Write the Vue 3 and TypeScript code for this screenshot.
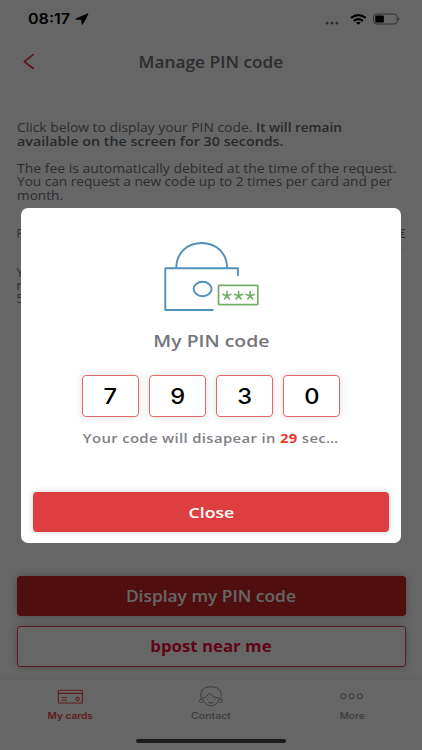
<script setup lang="ts">
import { ref } from 'vue'

const digits = ref<string[]>(['7', '9', '3', '0'])
const secondsLeft = ref(29)
const stars = [227, 238.6, 250.2]
</script>

<template>
  <div class="screen">
    <div class="status">
      <span class="time"><span class="fit">08:17</span></span>
      <svg class="arrow" width="14" height="12" viewBox="0 0 14 12"><path d="M13 .8.8 6l5.900.6.7 4.800z" fill="#000" stroke="#000" stroke-width="1" stroke-linejoin="round" /></svg>
      <svg class="signals" width="76" height="14" viewBox="325 11 76 14">
        <g fill="#707070"><circle cx="327" cy="22" r="1.5" /><circle cx="332" cy="22" r="1.5" /><circle cx="337" cy="22" r="1.5" /></g>
        <g fill="none" stroke="#000" stroke-width="2.1"><path d="M351 16.9q7.3-5.6 14.8 0" /><path d="M353.8 19.8q4.6-3.4 9.2 0" /></g>
        <path d="M355.9 21.6q2.5-1.6 5 0l-2.500 2.200z" />
        <rect x="373.6" y="13.1" width="23.6" height="9.9" rx="2.8" fill="none" stroke="#7b7b7b" stroke-width="1" />
        <path d="M398.300 16.300q2.400 1.800 0 3.500z" fill="#7b7b7b" />
        <rect x="375.3" y="14.500" width="8.6" height="7.1" rx="1.2" />
      </svg>
    </div>

    <header class="nav">
      <svg class="back" width="12" height="18" viewBox="0 0 12 18"><path d="M10.3 1.500 1.300 8.700l9 6.800" fill="none" stroke="#e62e3c" stroke-width="1.600" stroke-linecap="round" stroke-linejoin="round" /></svg>
      <h1><span class="fit">Manage PIN code</span></h1>
    </header>

    <main class="copy">
      <div class="para first">
        <div class="line"><span class="fit l1">Click below to display your PIN code. </span><b class="fit l1b">It will remain</b></div>
        <div class="line"><b class="fit l2">available on the screen for 30 seconds.</b></div>
      </div>
      <div class="para second">
        <div class="line"><span class="fit l3">The fee is automatically debited at the time of the request.</span></div>
        <div class="line"><span class="fit l4">You can request a new code up to 2 times per card and per</span></div>
        <div class="line"><span class="fit l4">month.</span></div>
      </div>
      <div class="fee"><span>F</span><span>€</span></div>
      <div class="para third">
        <div class="line">Y</div>
        <div class="line">n</div>
        <div class="line">5</div>
      </div>
    </main>

    <div class="actions">
      <button class="btn primary"><span class="fit">Display my PIN code</span></button>
      <button class="btn outline"><span class="fit">bpost near me</span></button>
    </div>

    <footer class="bottom">
      <nav class="tabs">
        <div class="tab active">
          <svg width="26" height="22" viewBox="57 685 26 22" fill="none" stroke="currentColor" stroke-width="1.1">
            <rect x="58.4" y="690.2" width="24" height="12.8" rx=".6" /><path d="M58.4 693.4h24M61.5 697.7h5.6M61.5 700.2h5.6" /><circle cx="77.7" cy="699" r="1.6" />
          </svg>
          <span class="fit">My cards</span>
        </div>
        <div class="tab contact">
          <svg width="26" height="22" viewBox="198 685 26 22" fill="none" stroke="currentColor" stroke-width="1" stroke-linecap="round">
            <path d="M201.2 699.5q-3.2-12.8 9.8-12.8t9.8 12.8" />
            <path d="M202.6 698.2c2.4-.7 5.2-2.4 7-5.2 2.7 3.7 6.2 4.7 9.8 5.2" />
            <path d="M203 699c.6 3.8 4.3 6.9 8 6.9s7.4-3.1 8-6.9" />
            <path d="M201.2 699.3q-2.2.2-1.7 2.2t3.3.7M220.8 699.3q2.2.2 1.7 2.2t-3.3.7" />
            <path d="M208.8 702.6q2.2 1.2 4.4 0M207.7 698.9v.3M214.3 698.9v.3" />
          </svg>
          <span class="fit">Contact</span>
        </div>
        <div class="tab">
          <svg width="26" height="22" viewBox="338.9 685 26 22" fill="none" stroke="currentColor" stroke-width="1.1">
            <circle cx="343.3" cy="696.3" r="2.5" /><circle cx="351.5" cy="696.3" r="2.5" /><circle cx="359.7" cy="696.3" r="2.5" />
          </svg>
          <span class="fit">More</span>
        </div>
      </nav>
      <div class="home"><i></i></div>
    </footer>

    <div class="overlay">
      <section class="modal">
        <svg class="lock" width="98" height="72" viewBox="162 242 98 72" fill="none">
          <g stroke="#4f91bc" stroke-width="1.9" stroke-linecap="round" stroke-linejoin="round">
            <path d="M176.3 268c0-15.2 11.2-25 25.3-25s25.5 9.8 25.5 25" />
            <path d="M237.9 275.2v-6.9h-72.6v41.7h47.5" />
            <ellipse cx="202.6" cy="289" rx="9" ry="7.2" />
          </g>
          <rect x="218.5" y="285.4" width="39.3" height="19.3" rx=".6" stroke="#74ad6a" stroke-width="1.7" />
          <g stroke="#74ad6a" stroke-width="1.6">
            <path v-for="x in stars" :key="x" :d="`M${x} 295.7v-4.9M${x} 295.7l-4.6-1.5M${x} 295.7l4.6-1.5M${x} 295.7l-2.9 3.9M${x} 295.7l2.9 3.9`" />
          </g>
        </svg>
        <h2><span class="fit">My PIN code</span></h2>
        <div class="pin">
          <div v-for="(d, i) in digits" :key="i" class="digit"><span class="fit">{{ d }}</span></div>
        </div>
        <p class="timer"><span class="fit">Your code will disapear in <b>{{ secondsLeft }}</b> sec…</span></p>
        <button class="close"><span class="fit">Close</span></button>
      </section>
    </div>
  </div>
</template>

<style>
body {
  margin: 0;
  background: #fff;
}
</style>

<style scoped>
.screen {
  position: relative;
  width: 422px;
  height: 750px;
  overflow: hidden;
  display: flex;
  flex-direction: column;
  background: #fff;
  font-family: 'Open Sans', 'Noto Sans', sans-serif;
  color: #717277;
}
.fit {
  display: inline-block;
  white-space: pre;
}
.status {
  height: 37px;
  flex: none;
  display: flex;
  align-items: center;
  padding-left: 27.5px;
  color: #000;
}
.time {
  width: 47px;
  font: 600 14px/20px Inter, sans-serif;
}
.time .fit {
  transform: scaleX(1.15);
  transform-origin: left;
}
.signals {
  margin: 0 21px 0 auto;
}
.nav {
  height: 50px;
  flex: none;
  display: grid;
  grid-template-columns: 1fr auto 1fr;
  align-items: center;
}
.back {
  margin-left: 23px;
}
h1,
h2,
p {
  margin: 0;
}
h1 {
  font-size: 15.5px;
  line-height: 24px;
  font-weight: 650;
  color: #707177;
}
h1 .fit {
  transform: scaleX(1.115);
}
.copy {
  flex: none;
  height: 455px;
  margin-top: 34px;
  padding: 0 16.5px;
  font-size: 12px;
}
.para .fit {
  transform-origin: left;
}
.line {
  display: flex;
}
.first {
  line-height: 14px;
}
.first b {
  font-weight: 600;
  color: #66676b;
}
.l1 {
  width: 207.5px;
  margin-right: 32px;
  transform: scaleX(1.154);
}
.l1b {
  transform: scaleX(1.13);
}
.l2 {
  transform: scaleX(1.19);
}
.l3 {
  transform: scaleX(1.163);
}
.l4 {
  transform: scaleX(1.137);
}
.second {
  margin-top: 13px;
  line-height: 13.3px;
}
.fee {
  display: flex;
  justify-content: space-between;
  margin-top: 17px;
  height: 30px;
  line-height: 30px;
  border-bottom: 1px solid #eee;
}
.third {
  margin-top: 16px;
  line-height: 13.3px;
}
.actions {
  flex: none;
  display: flex;
  flex-direction: column;
  gap: 10px;
  padding: 0 16.5px;
}
.btn {
  box-sizing: border-box;
  height: 40.3px;
  padding: 0;
  border: 1px solid #c52626;
  border-radius: 3px;
  font: 600 15.5px/24px 'Open Sans', sans-serif;
  box-shadow: 0 0 8px rgba(0, 0, 0, 0.25);
}
.btn .fit {
  transform: scaleX(1.12);
}
.primary {
  background: #c52626;
  color: #fff;
}
.outline {
  border: 1.5px solid #e8475a;
  background: #fff;
  color: #ef0a3a;
  font-weight: 700;
}
.outline .fit {
  transform: scaleX(1.085);
}
.bottom {
  flex: none;
  height: 70px;
  margin-top: 13.4px;
  box-shadow: 0 -2px 8px rgba(0, 0, 0, 0.08);
}
.tabs {
  display: grid;
  grid-template-columns: repeat(3, 1fr);
  height: 50px;
}
.tab {
  display: flex;
  flex-direction: column;
  align-items: center;
  padding-top: 5px;
  color: #96969a;
  font: 500 9px/17px Inter, sans-serif;
}
.tab .fit {
  transform: scaleX(1.12);
}
.active {
  color: #f0484f;
  font-weight: 600;
}
.contact .fit {
  transform: scaleX(1.17);
}
.home {
  display: flex;
  justify-content: center;
  padding-top: 9px;
}
.home i {
  width: 150px;
  height: 4px;
  border-radius: 2px;
  background: #444;
}
.overlay {
  position: absolute;
  inset: 0;
  display: flex;
  justify-content: center;
  align-items: flex-start;
  padding-top: 207.5px;
  background: rgba(0, 0, 0, 0.6);
}
.modal {
  box-sizing: border-box;
  width: 380.4px;
  height: 335px;
  padding: 34px 12px 10.5px;
  display: flex;
  flex-direction: column;
  align-items: center;
  border-radius: 7px;
  background: #fff;
}
.lock {
  flex: none;
}
h2 {
  margin-top: 15.5px;
  font-size: 16.5px;
  line-height: 24px;
  font-weight: 600;
  color: #74757a;
}
h2 .fit {
  transform: scaleX(1.175);
}
.pin {
  display: flex;
  gap: 10.3px;
  margin-top: 22px;
}
.digit {
  box-sizing: border-box;
  width: 57px;
  height: 42px;
  display: flex;
  align-items: center;
  justify-content: center;
  border: 1px solid #e0686c;
  border-radius: 4px;
  box-shadow: 0 0 7px rgba(0, 0, 0, 0.14);
  font: 550 21.5px/40px Inter, sans-serif;
  color: #000;
}
.digit .fit {
  transform: scaleX(1.1);
}
.timer {
  margin-top: 11px;
  font-size: 13px;
  line-height: 20px;
  font-weight: 600;
  letter-spacing: 0.3px;
  color: #7f8085;
}
.timer .fit {
  transform: scaleX(1.145);
}
.timer b {
  font-weight: 700;
  color: #e8382f;
}
.close {
  align-self: stretch;
  height: 40px;
  margin-top: auto;
  padding: 0;
  border: 0;
  border-radius: 4px;
  background: #dd3e40;
  box-shadow: 0 0 6px rgba(0, 0, 0, 0.2);
  color: #fff;
  font: 600 15px/24px 'Open Sans', sans-serif;
}
.close .fit {
  transform: scaleX(1.18);
}
</style>
